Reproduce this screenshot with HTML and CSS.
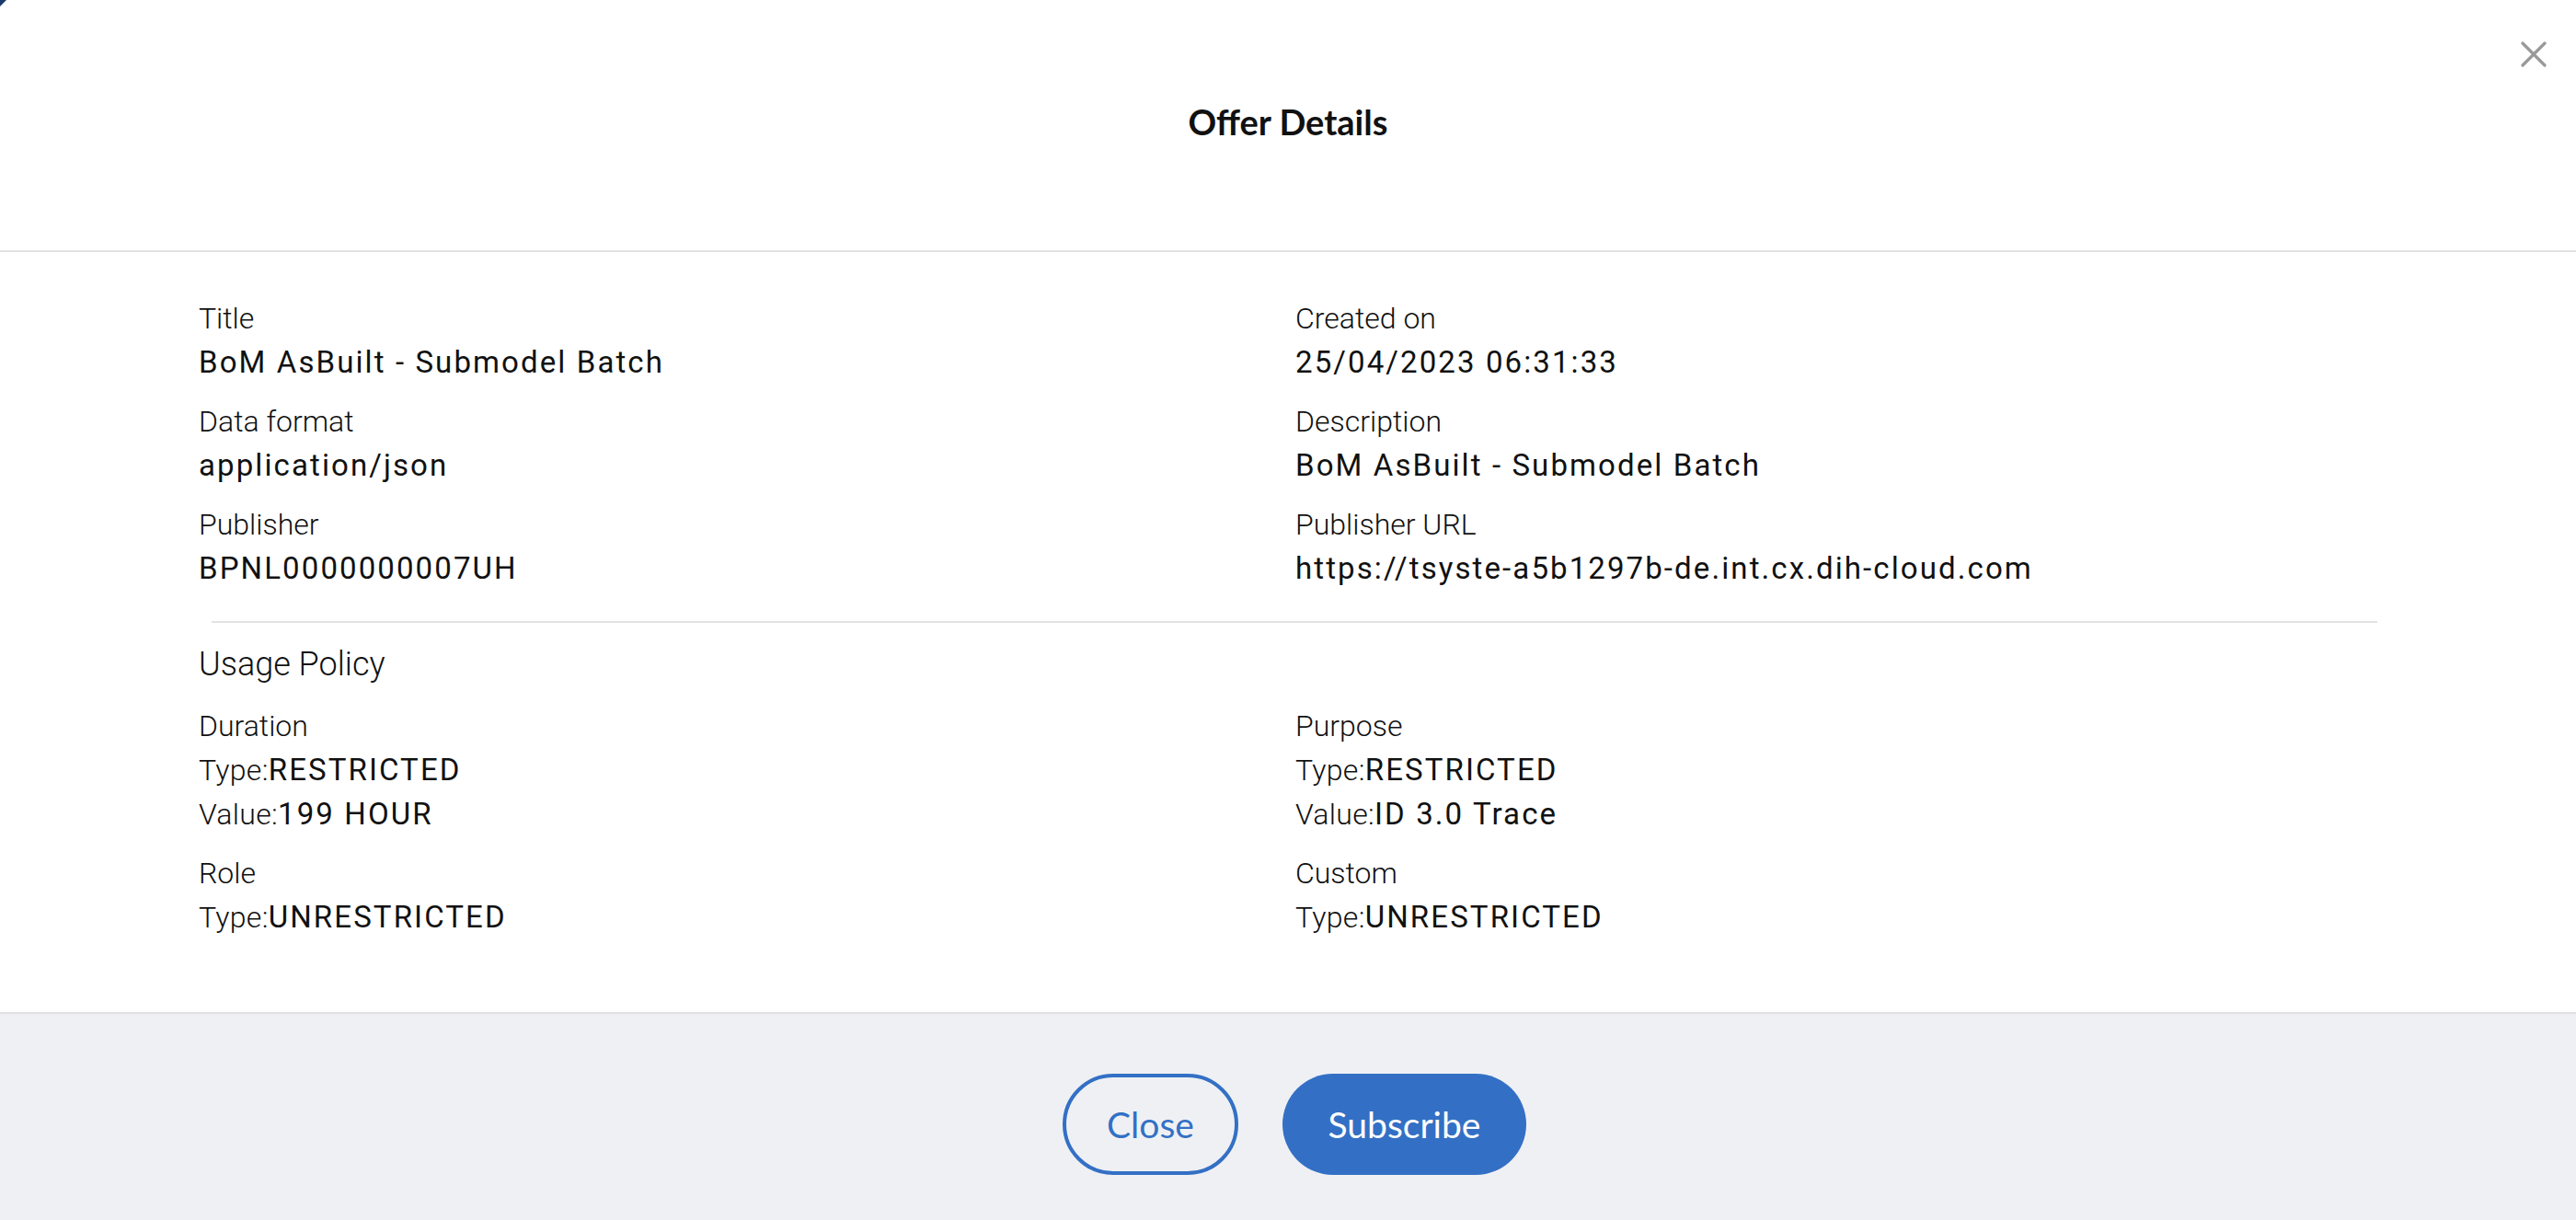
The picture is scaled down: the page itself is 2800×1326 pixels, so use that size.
FILE: index.html
```html
<!DOCTYPE html>
<html lang="en">
<head>
<meta charset="utf-8">
<title>Offer Details</title>
<link rel="stylesheet" href="styles.css">
</head>
<body>
<div class="corner"></div>
<div class="dialog">
  <header class="dialog-header">
    <h1 class="dialog-title">Offer Details</h1>
    <button class="close-x" aria-label="Close">
      <svg width="28" height="28" viewBox="0 0 28 28"><path d="M2 2 L26 26 M26 2 L2 26" stroke="#999" stroke-width="3.2" stroke-linecap="round" fill="none"/></svg>
    </button>
  </header>
  <main class="dialog-body">
    <section class="grid">
      <div class="field"><div class="label">Title</div><div class="value">BoM AsBuilt - Submodel Batch</div></div>
      <div class="field"><div class="label">Created on</div><div class="value">25/04/2023 06:31:33</div></div>
      <div class="field"><div class="label">Data format</div><div class="value">application/json</div></div>
      <div class="field"><div class="label">Description</div><div class="value">BoM AsBuilt - Submodel Batch</div></div>
      <div class="field"><div class="label">Publisher</div><div class="value">BPNL0000000007UH</div></div>
      <div class="field"><div class="label">Publisher URL</div><div class="value">https://tsyste-a5b1297b-de.int.cx.dih-cloud.com</div></div>
    </section>
    <hr class="divider">
    <h2 class="section-title">Usage Policy</h2>
    <section class="grid">
      <div class="field">
        <div class="label">Duration</div>
        <div class="line"><span class="key">Type:</span><span class="value-inline">RESTRICTED</span></div>
        <div class="line"><span class="key">Value:</span><span class="value-inline">199 HOUR</span></div>
      </div>
      <div class="field">
        <div class="label">Purpose</div>
        <div class="line"><span class="key">Type:</span><span class="value-inline">RESTRICTED</span></div>
        <div class="line"><span class="key">Value:</span><span class="value-inline">ID 3.0 Trace</span></div>
      </div>
      <div class="field">
        <div class="label">Role</div>
        <div class="line"><span class="key">Type:</span><span class="value-inline">UNRESTRICTED</span></div>
      </div>
      <div class="field">
        <div class="label">Custom</div>
        <div class="line"><span class="key">Type:</span><span class="value-inline">UNRESTRICTED</span></div>
      </div>
    </section>
  </main>
  <footer class="dialog-footer">
    <button class="btn btn-outline">Close</button>
    <button class="btn btn-primary">Subscribe</button>
  </footer>
</div>
</body>
</html>
```
FILE: styles.css
```css
html, body {
  margin: 0;
  padding: 0;
  background: #ffffff;
}
body {
  width: 2800px;
  height: 1326px;
  overflow: hidden;
  position: relative;
  font-family: "Roboto", "Liberation Sans", sans-serif;
  color: #111;
}
.corner {
  position: absolute;
  left: 0;
  top: 0;
  width: 0;
  height: 0;
  border-top: 7px solid #1b3a6b;
  border-right: 7px solid transparent;
}
.dialog {
  display: flex;
  flex-direction: column;
  height: 1326px;
}
.dialog-header {
  height: 272px;
  flex: none;
  border-bottom: 2px solid #e2e2e2;
  display: flex;
  justify-content: center;
  position: relative;
}
.dialog-title {
  margin: 0;
  padding-top: 109px;
  font-family: "Lato", sans-serif;
  font-weight: 700;
  font-size: 38px;
  line-height: 46px;
  color: #111;
}
.close-x {
  position: absolute;
  right: 32px;
  top: 45px;
  width: 28px;
  height: 28px;
  padding: 0;
  border: 0;
  background: none;
  display: flex;
}
.dialog-body {
  flex: 1;
  padding: 0 200px 0 216px;
}
.grid {
  display: grid;
  grid-template-columns: 1192px 1192px;
  row-gap: 16px;
}
.dialog-body > .grid:first-child {
  padding-top: 48px;
}
.label, .line, .value, .section-title {
  font-size: 32px;
  line-height: 48px;
}
.label, .key {
  font-weight: 300;
  color: #111;
}
.key {
  letter-spacing: 0.3px;
}
.value, .value-inline {
  font-size: 33px;
  letter-spacing: 2.1px;
  color: #111;
}
.divider {
  border: 0;
  border-top: 2px solid #e2e2e2;
  margin: 33px 16px 21px 14px;
}
.section-title {
  margin: 0 0 19px 0;
  font-weight: 300;
  font-size: 36px;
}
.dialog-footer {
  height: 226px;
  flex: none;
  box-sizing: border-box;
  border-top: 2px solid #e0e0e2;
  background: #eff0f4;
  display: flex;
  justify-content: center;
  align-items: center;
  gap: 48px;
  padding-left: 14px;
  padding-top: 16px;
}
.btn {
  height: 110px;
  border-radius: 55px;
  font-family: "Lato", sans-serif;
  font-size: 39px;
  box-sizing: border-box;
  cursor: pointer;
}
.btn-outline {
  width: 191px;
  background: transparent;
  border: 4px solid #3370c5;
  color: #3370c5;
}
.btn-primary {
  width: 265px;
  background: #3370c5;
  border: 0;
  color: #ffffff;
}
```
